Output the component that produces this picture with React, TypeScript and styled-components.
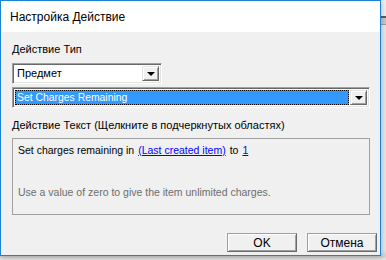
import styled, { createGlobalStyle } from "styled-components";

const GlobalStyle = createGlobalStyle`
  html, body {
    margin: 0;
    padding: 0;
    width: 386px;
    height: 260px;
    overflow: hidden;
    font-family: "Liberation Sans", Arial, sans-serif;
  }
`;

const Desktop = styled.div`
  width: 386px;
  height: 260px;
  display: flex;
  flex-direction: column;
  background: linear-gradient(
    #ececec 0px,
    #ececec 16px,
    #5a5a5a 16px,
    #5a5a5a 18px,
    #c4c4c4 18px,
    #c4c4c4 24px,
    #9a9a9a 24px,
    #9a9a9a 25px,
    #e4e4e4 25px,
    #e4e4e4 250px,
    #cfcfcf 256px,
    #e6e6e6 260px
  );
`;

const Window = styled.div`
  width: 381px;
  height: 256px;
  box-sizing: border-box;
  border: 1px solid #1883d7;
  display: flex;
  flex-direction: column;
  background: #f0f0f0;
  box-shadow: 1px 2px 4px rgba(0, 0, 0, 0.18);
`;

const TitleBar = styled.div`
  height: 31px;
  background: #ffffff;
  display: flex;
  align-items: center;
  padding-left: 9px;
  font-size: 12px;
  color: #000;
`;

const Body = styled.div`
  flex: 1;
  padding: 0 3px 0 11px;
  display: flex;
  flex-direction: column;
  font-size: 11px;
  color: #000;
`;

const Label = styled.div<{ $top: number }>`
  margin-top: ${(p) => p.$top}px;
  height: 13px;
  line-height: 13px;
  white-space: nowrap;
`;

const Combo = styled.div<{ $width: number; $top: number }>`
  margin-top: ${(p) => p.$top}px;
  width: ${(p) => p.$width}px;
  height: 21px;
  box-sizing: border-box;
  display: flex;
  background: #ffffff;
  border-style: solid;
  border-width: 1px;
  border-color: #a0a0a0 #ffffff #ffffff #a0a0a0;
  box-shadow: inset 1px 1px #696969, inset -1px -1px #e3e3e3;
  padding: 2px;
`;

const ComboField = styled.div<{ $selected?: boolean }>`
  flex: 1;
  display: flex;
  align-items: center;
  padding-left: 2px;
  line-height: 13px;
  white-space: nowrap;
  font-size: ${(p) => (p.$selected ? "10.4px" : "11px")};
  background: ${(p) => (p.$selected ? "#3399ff" : "transparent")};
  color: ${(p) => (p.$selected ? "#ffffff" : "#000000")};
  outline: ${(p) => (p.$selected ? "1px dotted #000" : "none")};
  outline-offset: -1px;
  margin-right: 1px;
`;

const ComboButton = styled.div`
  width: 17px;
  box-sizing: border-box;
  background: #f0f0f0;
  border-style: solid;
  border-width: 1px;
  border-color: #e3e3e3 #696969 #696969 #e3e3e3;
  box-shadow: inset 1px 1px #ffffff, inset -1px -1px #a0a0a0;
  display: flex;
  align-items: center;
  justify-content: center;
`;

const Arrow = styled.div`
  width: 0;
  height: 0;
  border-left: 4px solid transparent;
  border-right: 4px solid transparent;
  border-top: 4px solid #000;
  margin-top: 1px;
`;

const TextPanel = styled.div`
  margin-top: 6px;
  width: 358px;
  height: 77px;
  box-sizing: border-box;
  border: 1px solid #a0a0a0;
  padding: 5px 0 0 5px;
  display: flex;
  flex-direction: column;
  font-size: 10.5px;
`;

const Line = styled.div<{ $muted?: boolean; $top?: number }>`
  height: 13px;
  line-height: 13px;
  margin-top: ${(p) => p.$top ?? 0}px;
  white-space: nowrap;
  color: ${(p) => (p.$muted ? "#6d6d6d" : "#000")};
`;

const Link = styled.span`
  color: #0000ff;
  text-decoration: underline;
  margin-left: 4px;
  margin-right: 4px;
`;

const ButtonRow = styled.div`
  margin-top: 18px;
  display: flex;
  justify-content: flex-end;
  gap: 10px;
`;

const Button = styled.div`
  width: 70px;
  height: 19px;
  box-sizing: border-box;
  background: #f0f0f0;
  border-style: solid;
  border-width: 1px;
  border-color: #a0a0a0 #696969 #696969 #a0a0a0;
  box-shadow: inset 1px 1px #ffffff, inset -1px -1px #a0a0a0;
  display: flex;
  align-items: center;
  justify-content: center;
  font-size: 12px;
`;

export default function App() {
  return (
    <>
      <GlobalStyle />
      <Desktop>
        <Window>
          <TitleBar>Настройка Действие</TitleBar>
          <Body>
            <Label $top={11}>Действие Тип</Label>
            <Combo $width={150} $top={7}>
              <ComboField>Предмет</ComboField>
              <ComboButton>
                <Arrow />
              </ComboButton>
            </Combo>
            <Combo $width={358} $top={3}>
              <ComboField $selected>Set Charges Remaining</ComboField>
              <ComboButton>
                <Arrow />
              </ComboButton>
            </Combo>
            <Label $top={11}>
              Действие Текст (Щелкните в подчеркнутых областях)
            </Label>
            <TextPanel>
              <Line>
                Set charges remaining in
                <Link>(Last created item)</Link>
                to
                <Link>1</Link>
              </Line>
              <Line $muted $top={29}>
                Use a value of zero to give the item unlimited charges.
              </Line>
            </TextPanel>
            <ButtonRow>
              <Button>OK</Button>
              <Button>Отмена</Button>
            </ButtonRow>
          </Body>
        </Window>
      </Desktop>
    </>
  );
}
